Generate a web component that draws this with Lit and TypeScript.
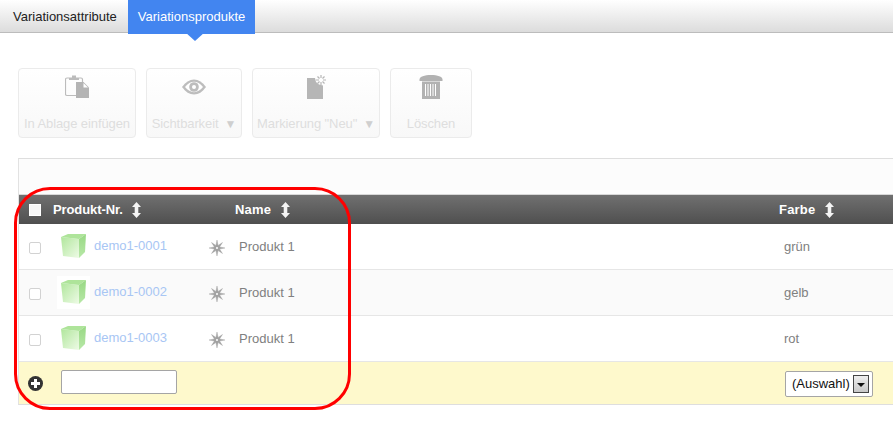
import { LitElement, html, css, svg } from 'lit';
import { customElement } from 'lit/decorators.js';

const clipboardIcon = html`<svg width="24" height="24" viewBox="0 0 24 24">
  <path d="M4 3H2a1.500 1.500 0 0 0-1.500 1.500V19A1.500 1.500 0 0 0 2 20.500h9M14 3h2a1.500 1.500 0 0 1 1.500 1.500V7" fill="none" stroke="#bcbcbc" stroke-width="1.200"/>
  <path d="M4 5V2.500h3V.5h4v2h3V5z" fill="#bcbcbc"/>
  <path d="M11 7h7.500l5.500 5.500V23H11z" fill="#b4b4b4"/>
  <path d="M18.500 8v4.500H23z" fill="#fff"/>
</svg>`;

const eyeIcon = html`<svg width="24" height="16" viewBox="0 0 24 16">
  <path d="M0 8C3.500 3 7.500.5 12 .5S20.500 3 24 8c-3.500 5-7.500 7.500-12 7.500S3.500 13 0 8z" fill="#bdbdbd"/>
  <path d="M3 8c2.800-3.400 5.800-5.200 9-5.200s6.200 1.800 9 5.200c-2.800 3.400-5.800 5.200-9 5.200S5.800 11.400 3 8z" fill="#fff"/>
  <circle cx="12" cy="8" r="4.800" fill="#bdbdbd"/>
  <circle cx="12" cy="8" r="2" fill="#fff"/>
</svg>`;

const newIcon = html`<svg width="22" height="24" viewBox="0 0 22 24">
  <path d="M2 3h8l1 4 3 2.500 4 1V24H2z" fill="#b6b6b6"/>
  <path d="M16 0v3M16 7v3M11 5h3M18 5h3M12.500 1.500l2 2M19.500 1.500l-2 2M12.500 8.500l2-2M19.500 8.500l-2-2" stroke="#b6b6b6" stroke-width="1.200"/>
</svg>`;

const trashIcon = html`<svg width="24" height="24" viewBox="0 0 24 24">
  <path d="M.5 4.500C.5 1.500 5.500 0 12 0s11.500 1.500 11.500 4.500V6H.5z" fill="#b2b2b2"/>
  <path d="M3 6.500h18V24H3z" fill="#b2b2b2"/>
  <path d="M6.500 9v12M9 9v12M11.500 9v12M14 9v12M16.500 9v12" stroke="#fff" stroke-width="1"/>
</svg>`;

const sortIcon = html`<svg class="sort" width="9" height="16" viewBox="0 0 9 16">
  <path d="M4.500 0L9 5H6.300v6H9l-4.500 5L0 11h2.700V5H0z" fill="#f4f4f4"/>
</svg>`;

const starIcon = html`<svg class="star" width="16" height="16" viewBox="0 0 16 16">
  <path d="M8 0l1.070 5.400 4.430-2.900-2.900 4.430L16 8l-5.400 1.070 2.900 4.430-4.430-2.900L8 16l-1.070-5.400-4.430 2.900 2.900-4.430L0 8l5.400-1.070-2.900-4.430 4.430 2.900z" fill="#a2a2a2" stroke="#a2a2a2" stroke-width=".4"/>
  <circle cx="8" cy="8" r="1" fill="#fff"/>
</svg>`;

const plusIcon = html`<svg width="15" height="15" viewBox="0 0 15 15">
  <circle cx="7.500" cy="7.500" r="7.500" fill="#333"/>
  <path d="M6 3h3v3h3v3H9v3H6V9H3V6h3z" fill="#fff"/>
</svg>`;

const cubeIcon = (id: string) => html`<svg width="26" height="25" viewBox="0 0 26 25">
  ${svg`<defs>
    <linearGradient id=${id + 'f'} x1="0" y1="0" x2="1" y2="1">
      <stop offset="0" stop-color="#b0e69c"/><stop offset="1" stop-color="#eefbe6"/>
    </linearGradient>
    <linearGradient id=${id + 's'} x1="0" y1="0" x2="0" y2="1">
      <stop offset="0" stop-color="#98d884"/><stop offset="1" stop-color="#b8e8a8"/>
    </linearGradient>
  </defs>
  <path d="M0 3l18 2v19L2 22z" fill="url(#${id + 'f'})"/>
  <path d="M0 3l7-3h18l-7 5z" fill="#aee49a"/>
  <path d="M18 5l7-5-1 18-6 6z" fill="url(#${id + 's'})"/>`}
</svg>`;

const actions = [
  { label: 'In Ablage einfügen', icon: clipboardIcon, width: 118, menu: false },
  { label: 'Sichtbarkeit', icon: eyeIcon, width: 96, menu: true },
  { label: 'Markierung "Neu"', icon: newIcon, width: 128, menu: true },
  { label: 'Löschen', icon: trashIcon, width: 82, menu: false },
];

const products = [
  { nr: 'demo1-0001', name: 'Produkt 1', color: 'grün' },
  { nr: 'demo1-0002', name: 'Produkt 1', color: 'gelb' },
  { nr: 'demo1-0003', name: 'Produkt 1', color: 'rot' },
];

@customElement('app-root')
export class AppRoot extends LitElement {
  static styles = css`
    :host {
      display: block;
      position: relative;
      width: 893px;
      height: 431px;
      overflow: hidden;
      background: #fff;
      font-family: "Liberation Sans", Arial, sans-serif;
      font-size: 13px;
    }

    .tabs {
      display: flex;
      height: 32px;
      padding-left: 1px;
      background: linear-gradient(#fff, #dcdcdc);
      border-bottom: 1px solid #bcbcbc;
    }
    .tab {
      display: flex;
      align-items: center;
      padding: 0 11px 0 12px;
      color: #222;
    }
    .tab.active {
      position: relative;
      height: 33px;
      padding: 0 10px 1px;
      background: #4285f0;
      color: #fff;
    }
    .tab.active::after {
      content: '';
      position: absolute;
      left: 57px;
      top: 32px;
      border: 10px solid transparent;
      border-top: 9px solid #4285f0;
      border-bottom: 0;
    }

    .toolbar {
      display: flex;
      gap: 10px;
      margin: 35px 0 0 18px;
    }
    .action {
      box-sizing: border-box;
      display: flex;
      flex-direction: column;
      align-items: center;
      height: 70px;
      border: 1px solid #ebebeb;
      border-radius: 4px;
      background: linear-gradient(#fff, #f8f8f8);
      color: #dedede;
      white-space: nowrap;
    }
    .action .icon {
      display: flex;
      align-items: center;
      justify-content: center;
      height: 24px;
      margin-top: 6px;
    }
    .action .label {
      margin-top: 17px;
      letter-spacing: -0.1px;
    }
    .caret {
      margin-left: 6px;
      font-size: 12px;
      color: #cfcfcf;
    }

    .table {
      margin: 20px 0 0 18px;
      border-left: 1px solid #e2e2e2;
      border-top: 1px solid #dedede;
      border-bottom: 1px solid #dedede;
    }
    .filter {
      height: 35px;
      background: #fcfcfc;
      border-bottom: 1px solid #d8d8d8;
    }
    .head {
      display: grid;
      grid-template-columns: 34px 182px 544px 1fr;
      align-items: center;
      height: 29px;
      background: linear-gradient(#707070, #4f4f4f);
      color: #fff;
      font-weight: bold;
    }
    .head > span {
      display: flex;
      align-items: center;
      gap: 9px;
      letter-spacing: -0.1px;
    }
    .head > span.wide {
      gap: 10px;
      letter-spacing: 0.2px;
    }
    .row {
      display: grid;
      grid-template-columns: 38px 37px 115px 30px 545px 1fr;
      align-items: center;
      box-sizing: border-box;
      height: 46px;
      color: #808080;
      border-bottom: 1px solid #e6e6e6;
    }
    .row.alt {
      background: #fafafa;
    }
    .box {
      box-sizing: border-box;
      width: 12px;
      height: 12px;
      margin-left: 10px;
    }
    .head .box {
      background: #f6f6f6;
      border: 1px solid #fff;
    }
    .row .box {
      margin-top: 2px;
      background: #fff;
      border: 1px solid #d2d2d2;
      border-radius: 2px;
    }
    .thumb {
      display: flex;
      align-items: center;
      justify-content: center;
      width: 33px;
      height: 33px;
      background: #fff;
    }
    .nr {
      margin-top: -2px;
      color: #a8c6f4;
    }
    .star {
      display: block;
      margin-top: 2px;
    }
    .add {
      display: flex;
      align-items: center;
      justify-content: space-between;
      height: 42px;
      background: #fef9cc;
    }
    .add .new {
      display: flex;
      align-items: center;
      gap: 18px;
      padding-left: 9px;
    }
    .add input {
      box-sizing: border-box;
      width: 116px;
      height: 24px;
      margin: -2px 0 0;
      border: 1px solid #a5a5a5;
      border-radius: 2px;
      background: #fff;
    }
    .select {
      box-sizing: border-box;
      display: flex;
      align-items: center;
      justify-content: space-between;
      width: 88px;
      height: 26px;
      margin: 1px 20px 0 0;
      padding: 0 3px 0 6px;
      border: 1px solid #a5a5a5;
      border-radius: 2px;
      background: #fff;
      color: #111;
    }
    .drop {
      box-sizing: border-box;
      position: relative;
      width: 16px;
      height: 18px;
      border: 1px solid #444;
      background: linear-gradient(#eee, #c8c8c8);
    }
    .drop::after {
      content: '';
      position: absolute;
      left: 3px;
      top: 7px;
      border: 4px solid transparent;
      border-top: 4px solid #111;
      border-bottom: 0;
    }

    .mark {
      position: absolute;
      left: 14px;
      top: 187px;
      box-sizing: border-box;
      width: 337px;
      height: 223px;
      border: 3px solid #f00;
      border-radius: 36px;
      pointer-events: none;
    }
  `;

  render() {
    return html`
      <div class="tabs">
        <div class="tab">Variationsattribute</div>
        <div class="tab active">Variationsprodukte</div>
      </div>

      <div class="toolbar">
        ${actions.map(a => html`
          <div class="action" style="width:${a.width}px">
            <div class="icon">${a.icon}</div>
            <div class="label">${a.label}${a.menu ? html`<span class="caret">▼</span>` : ''}</div>
          </div>
        `)}
      </div>

      <div class="table">
        <div class="filter"></div>
        <div class="head">
          <div class="box"></div>
          <span>Produkt-Nr. ${sortIcon}</span>
          <span class="wide">Name ${sortIcon}</span>
          <span class="wide">Farbe ${sortIcon}</span>
        </div>
        ${products.map((p, i) => html`
          <div class="row ${i % 2 ? 'alt' : ''}">
            <div class="box"></div>
            <div class="thumb">${cubeIcon('c' + i)}</div>
            <div class="nr">${p.nr}</div>
            ${starIcon}
            <div>${p.name}</div>
            <div>${p.color}</div>
          </div>
        `)}
        <div class="add">
          <div class="new">
            ${plusIcon}
            <input type="text" />
          </div>
          <div class="select">(Auswahl)<span class="drop"></span></div>
        </div>
      </div>

      <div class="mark"></div>
    `;
  }
}
